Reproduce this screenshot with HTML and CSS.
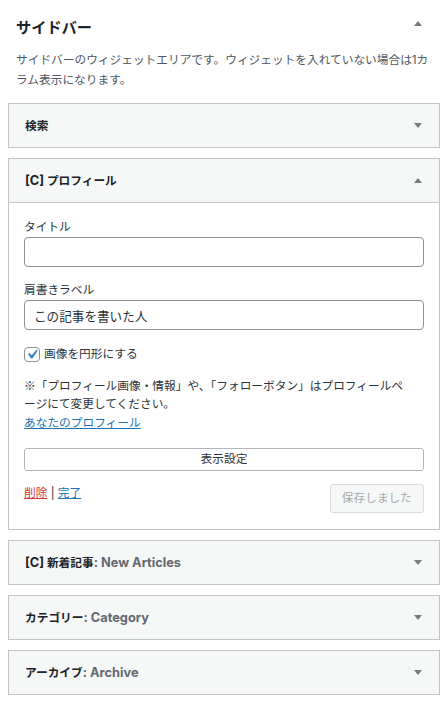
FILE: index.html
```html
<!DOCTYPE html>
<html lang="ja">
<head>
<meta charset="utf-8">
<title>サイドバー</title>
<link rel="stylesheet" href="styles.css">
</head>
<body>
<div class="sidebar">
  <div class="sidebar-head">
    <h2 class="sidebar-title">サイドバー</h2>
    <span class="arrow arrow-up"></span>
  </div>
  <p class="sidebar-desc">サイドバーのウィジェットエリアです。ウィジェットを入れていない場合は1カ<br>ラム表示になります。</p>

  <div class="widget">
    <div class="widget-top">
      <h3 class="widget-title">検索</h3>
      <span class="arrow arrow-down"></span>
    </div>
  </div>

  <div class="widget">
    <div class="widget-top">
      <h3 class="widget-title"><span class="latin">[C]</span> プロフィール</h3>
      <span class="arrow arrow-up"></span>
    </div>
    <div class="widget-inside">
      <div class="field">
        <label class="field-label">タイトル</label>
        <input class="text-input" type="text" value="">
      </div>
      <div class="field">
        <label class="field-label">肩書きラベル</label>
        <input class="text-input" type="text" value="この記事を書いた人">
      </div>
      <label class="check">
        <span class="checkbox"><svg viewBox="2.5 2.5 15 15" width="15" height="15"><path d="M14.83 4.89l1.34.94-5.81 8.38H9.02L5.78 9.67l1.34-1.25 2.57 2.4z" fill="#3582c4"/></svg></span>
        画像を円形にする
      </label>
      <p class="note"><span class="cjk">※</span>「プロフィール画像・情報」や、「フォローボタン」はプロフィールペ<br>ージにて変更してください。</p>
      <div class="profile-link"><a href="#" class="link">あなたのプロフィール</a></div>
      <button class="wide-button" type="button">表示設定</button>
      <div class="actions">
        <div class="action-links"><a href="#" class="link link-delete">削除</a> | <a href="#" class="link">完了</a></div>
        <button class="save-button" type="button">保存しました</button>
      </div>
    </div>
  </div>

  <div class="widget">
    <div class="widget-top">
      <h3 class="widget-title"><span class="latin">[C]</span> 新着記事<span class="in-title latin">: New Articles</span></h3>
      <span class="arrow arrow-down"></span>
    </div>
  </div>

  <div class="widget">
    <div class="widget-top">
      <h3 class="widget-title">カテゴリー<span class="in-title latin">: Category</span></h3>
      <span class="arrow arrow-down"></span>
    </div>
  </div>

  <div class="widget">
    <div class="widget-top">
      <h3 class="widget-title">アーカイブ<span class="in-title latin">: Archive</span></h3>
      <span class="arrow arrow-down"></span>
    </div>
  </div>
</div>
</body>
</html>
```
FILE: styles.css
```css
html, body {
  margin: 0;
  padding: 0;
  background: #ffffff;
}

body {
  font-family: Inter, "Noto Sans CJK JP", sans-serif;
  font-size: 11.7px;
  color: #1d2327;
}

.sidebar {
  width: 448px;
}

.sidebar-head {
  display: flex;
  justify-content: space-between;
  align-items: flex-start;
  padding: 16px 26px 0 16px;
}

.sidebar-title {
  margin: 0;
  font-size: 15.2px;
  line-height: 23px;
  font-weight: 700;
  color: #1d2327;
}

.sidebar-head .arrow {
  margin-top: 5px;
}

.arrow {
  display: block;
  width: 0;
  height: 0;
  border-left: 4px solid transparent;
  border-right: 4px solid transparent;
}

.arrow-up {
  border-bottom: 5px solid #787c82;
}

.arrow-down {
  border-top: 5px solid #787c82;
}

.sidebar-desc {
  margin: 11px 0 13px;
  padding: 0 16px;
  line-height: 20px;
  color: #50575e;
  white-space: nowrap;
}

.widget {
  margin: 0 8px 10px;
  border: 1px solid #c3c4c7;
  background: #f6f7f7;
}

.widget-top {
  display: flex;
  justify-content: space-between;
  align-items: center;
  height: 43px;
  padding: 0 17px 0 16px;
}

.widget-title {
  margin: 0;
  font-size: 11.7px;
  font-weight: 700;
  line-height: 18px;
  color: #1d2327;
}

.latin {
  font-size: 12.8px;
}

.in-title {
  color: #646970;
}

.cjk {
  font-family: "Noto Sans CJK JP", sans-serif;
}

.widget-inside {
  background: #ffffff;
  border-top: 1px solid #c3c4c7;
  padding: 15px 15px 16px;
}

.field + .field {
  margin-top: 14px;
}

.field-label {
  display: block;
  line-height: 18px;
  margin-bottom: 1px;
  color: #2c3338;
}

.text-input {
  display: block;
  box-sizing: border-box;
  width: 100%;
  height: 30px;
  margin: 0;
  padding: 0 9px;
  border: 1px solid #8c8f94;
  border-radius: 4px;
  background: #ffffff;
  font-family: inherit;
  font-size: 12.6px;
  color: #2c3338;
}

.check {
  display: flex;
  align-items: center;
  margin-top: 15px;
  line-height: 18px;
  color: #2c3338;
}

.checkbox {
  display: flex;
  align-items: center;
  justify-content: center;
  box-sizing: border-box;
  width: 16px;
  height: 15px;
  margin-right: 4px;
  border: 1px solid #8c8f94;
  border-radius: 4px;
  background: #ffffff;
}

.checkbox svg {
  display: block;
}

.note {
  margin: 13px 0 0;
  line-height: 18px;
  white-space: nowrap;
  color: #2c3338;
}

.profile-link {
  line-height: 18px;
  margin-top: 1px;
}

.link {
  color: #2271b1;
  text-decoration: underline;
}

.link-delete {
  color: #d63638;
}

.wide-button {
  display: block;
  box-sizing: border-box;
  width: 100%;
  height: 23px;
  margin: 16px 0 0;
  padding: 0;
  border: 1px solid #b3b6b9;
  border-radius: 3px;
  background: #ffffff;
  font-family: inherit;
  font-size: 11.7px;
  line-height: 21px;
  color: #2c3338;
}

.actions {
  display: flex;
  justify-content: space-between;
  align-items: flex-start;
  margin-top: 13px;
}

.action-links {
  line-height: 18px;
  color: #2c3338;
}

.save-button {
  box-sizing: border-box;
  height: 29px;
  margin: 0;
  padding: 0 11px;
  border: 1px solid #dcdcde;
  border-radius: 3px;
  background: #f6f7f7;
  font-family: inherit;
  font-size: 11.7px;
  line-height: 27px;
  color: #a7aaad;
}
```
